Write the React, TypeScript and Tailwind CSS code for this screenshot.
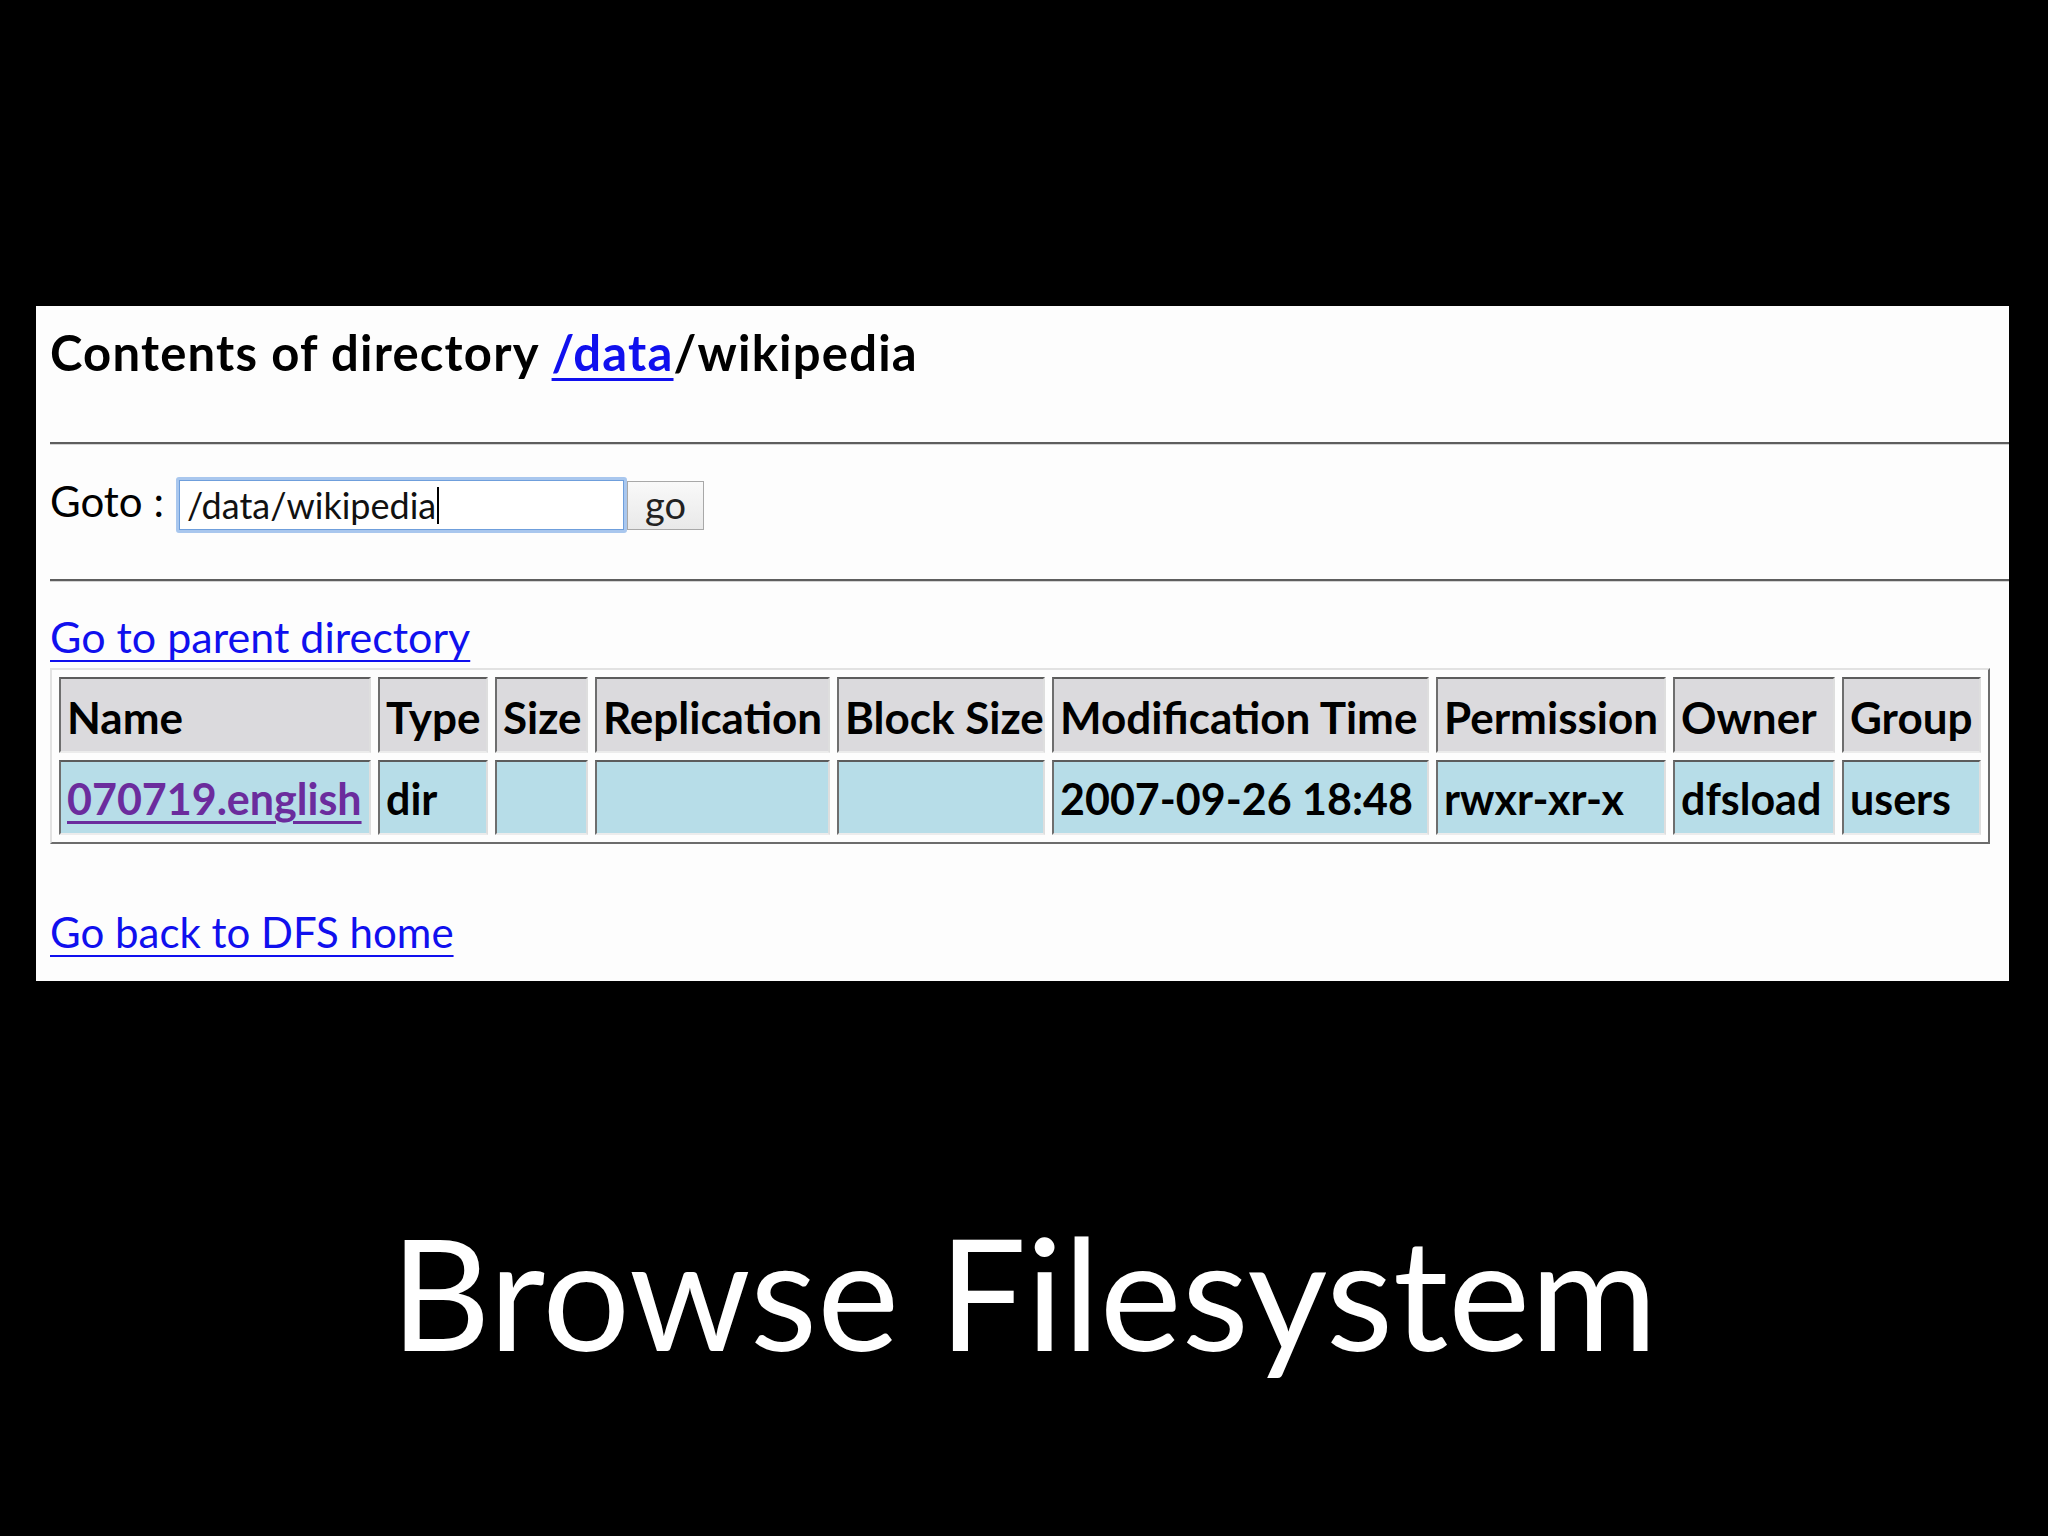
import React from "react";

const headers: { label: string; w: string }[] = [
  { label: "Name", w: "w-[312px]" },
  { label: "Type", w: "w-[110px]" },
  { label: "Size", w: "w-[93px]" },
  { label: "Replication", w: "w-[235px]" },
  { label: "Block Size", w: "w-[208px]" },
  { label: "Modification Time", w: "w-[377px]" },
  { label: "Permission", w: "w-[230px]" },
  { label: "Owner", w: "w-[162px]" },
  { label: "Group", w: "w-[139px]" },
];

const rowVals = ["", "dir", "", "", "", "2007-09-26 18:48", "rwxr-xr-x", "dfsload", "users"];

const cellBase =
  "shrink-0 flex items-center pl-[6px] border-2 border-t-[#5c5c5c] border-l-[#6e6e6e] border-b-[#ececec] border-r-[#dedede] whitespace-nowrap overflow-hidden";

export default function App() {
  return (
    <div
      className="w-[2048px] h-[1536px] bg-black flex flex-col overflow-hidden"
      style={{ fontFamily: "Lato, 'Open Sans', sans-serif" }}
    >
      <div className="mt-[306px] ml-[36px] w-[1973px] h-[675px] bg-[#fdfdfd] pl-[14px] flex flex-col text-black">
        <div className="mt-[22px] h-[48px] leading-[48px] text-[49px] tracking-[1.2px] font-bold whitespace-nowrap">
          Contents of directory{" "}
          <a className="text-[#1010ee] underline decoration-[3px] underline-offset-[7px]">/data</a>
          /wikipedia
        </div>

        <div className="mt-[66px] h-[3px] border-t-2 border-t-[#5e5e5e] border-b border-b-[#d4d4d4]" />

        <div className="mt-[32px] h-[56px] flex items-center">
          <div className="self-start w-[126px] h-[56px] leading-[48px] text-[42px] whitespace-nowrap">Goto :</div>
          <div className="w-[451px] h-[56px] border-[3px] border-[#a9c7ee] shadow-[inset_0_0_0_1px_#6f9fdc] rounded-[3px] flex items-center pl-[8px] bg-white">
            <span className="text-[36px] leading-[40px] text-[#111]">/data/wikipedia</span>
            <span className="w-[2px] h-[37px] bg-black ml-[1px]" />
          </div>
          <div className="w-[77px] h-[49px] border border-[#a8a8a8] bg-gradient-to-b from-[#f9f9f9] to-[#e9e9e9] flex items-center justify-center text-[38px] leading-[40px] text-[#222] pb-[2px]">
            go
          </div>
        </div>

        <div className="mt-[46px] h-[3px] border-t-2 border-t-[#5e5e5e] border-b border-b-[#d4d4d4]" />

        <div className="mt-[34px] h-[42px] leading-[42px] text-[43px] whitespace-nowrap">
          <a className="text-[#1010ee] underline decoration-[2px] underline-offset-[7px]">Go to parent directory</a>
        </div>

        <div className="mt-[10px] w-[1940px] border-2 border-t-[#e2e2e2] border-l-[#e2e2e2] border-r-[#6c6c6c] border-b-[#6c6c6c] p-[7px] flex flex-col gap-[7px]">
          <div className="flex gap-[7px]">
            {headers.map((h) => (
              <div key={h.label} className={`${cellBase} ${h.w} h-[76px] bg-[#dbdadd] text-[44px] font-bold pt-[4px]`}>
                {h.label}
              </div>
            ))}
          </div>
          <div className="flex gap-[7px]">
            {headers.map((h, i) => (
              <div key={h.label} className={`${cellBase} ${h.w} h-[75px] bg-[#b7dde8] text-[43px] font-bold pt-[4px]`}>
                {i === 0 ? (
                  <a className="text-[#6b2c9d] underline decoration-[3px] underline-offset-[6px]">070719.english</a>
                ) : (
                  rowVals[i]
                )}
              </div>
            ))}
          </div>
        </div>

        <div className="mt-[67px] h-[42px] leading-[42px] text-[42px] whitespace-nowrap">
          <a className="text-[#1010ee] underline decoration-[2px] underline-offset-[7px]">Go back to DFS home</a>
        </div>
      </div>

      <div className="mt-[233px] h-[155px] leading-[155px] text-[155px] text-white text-center whitespace-nowrap">
        Browse Filesystem
      </div>
    </div>
  );
}
